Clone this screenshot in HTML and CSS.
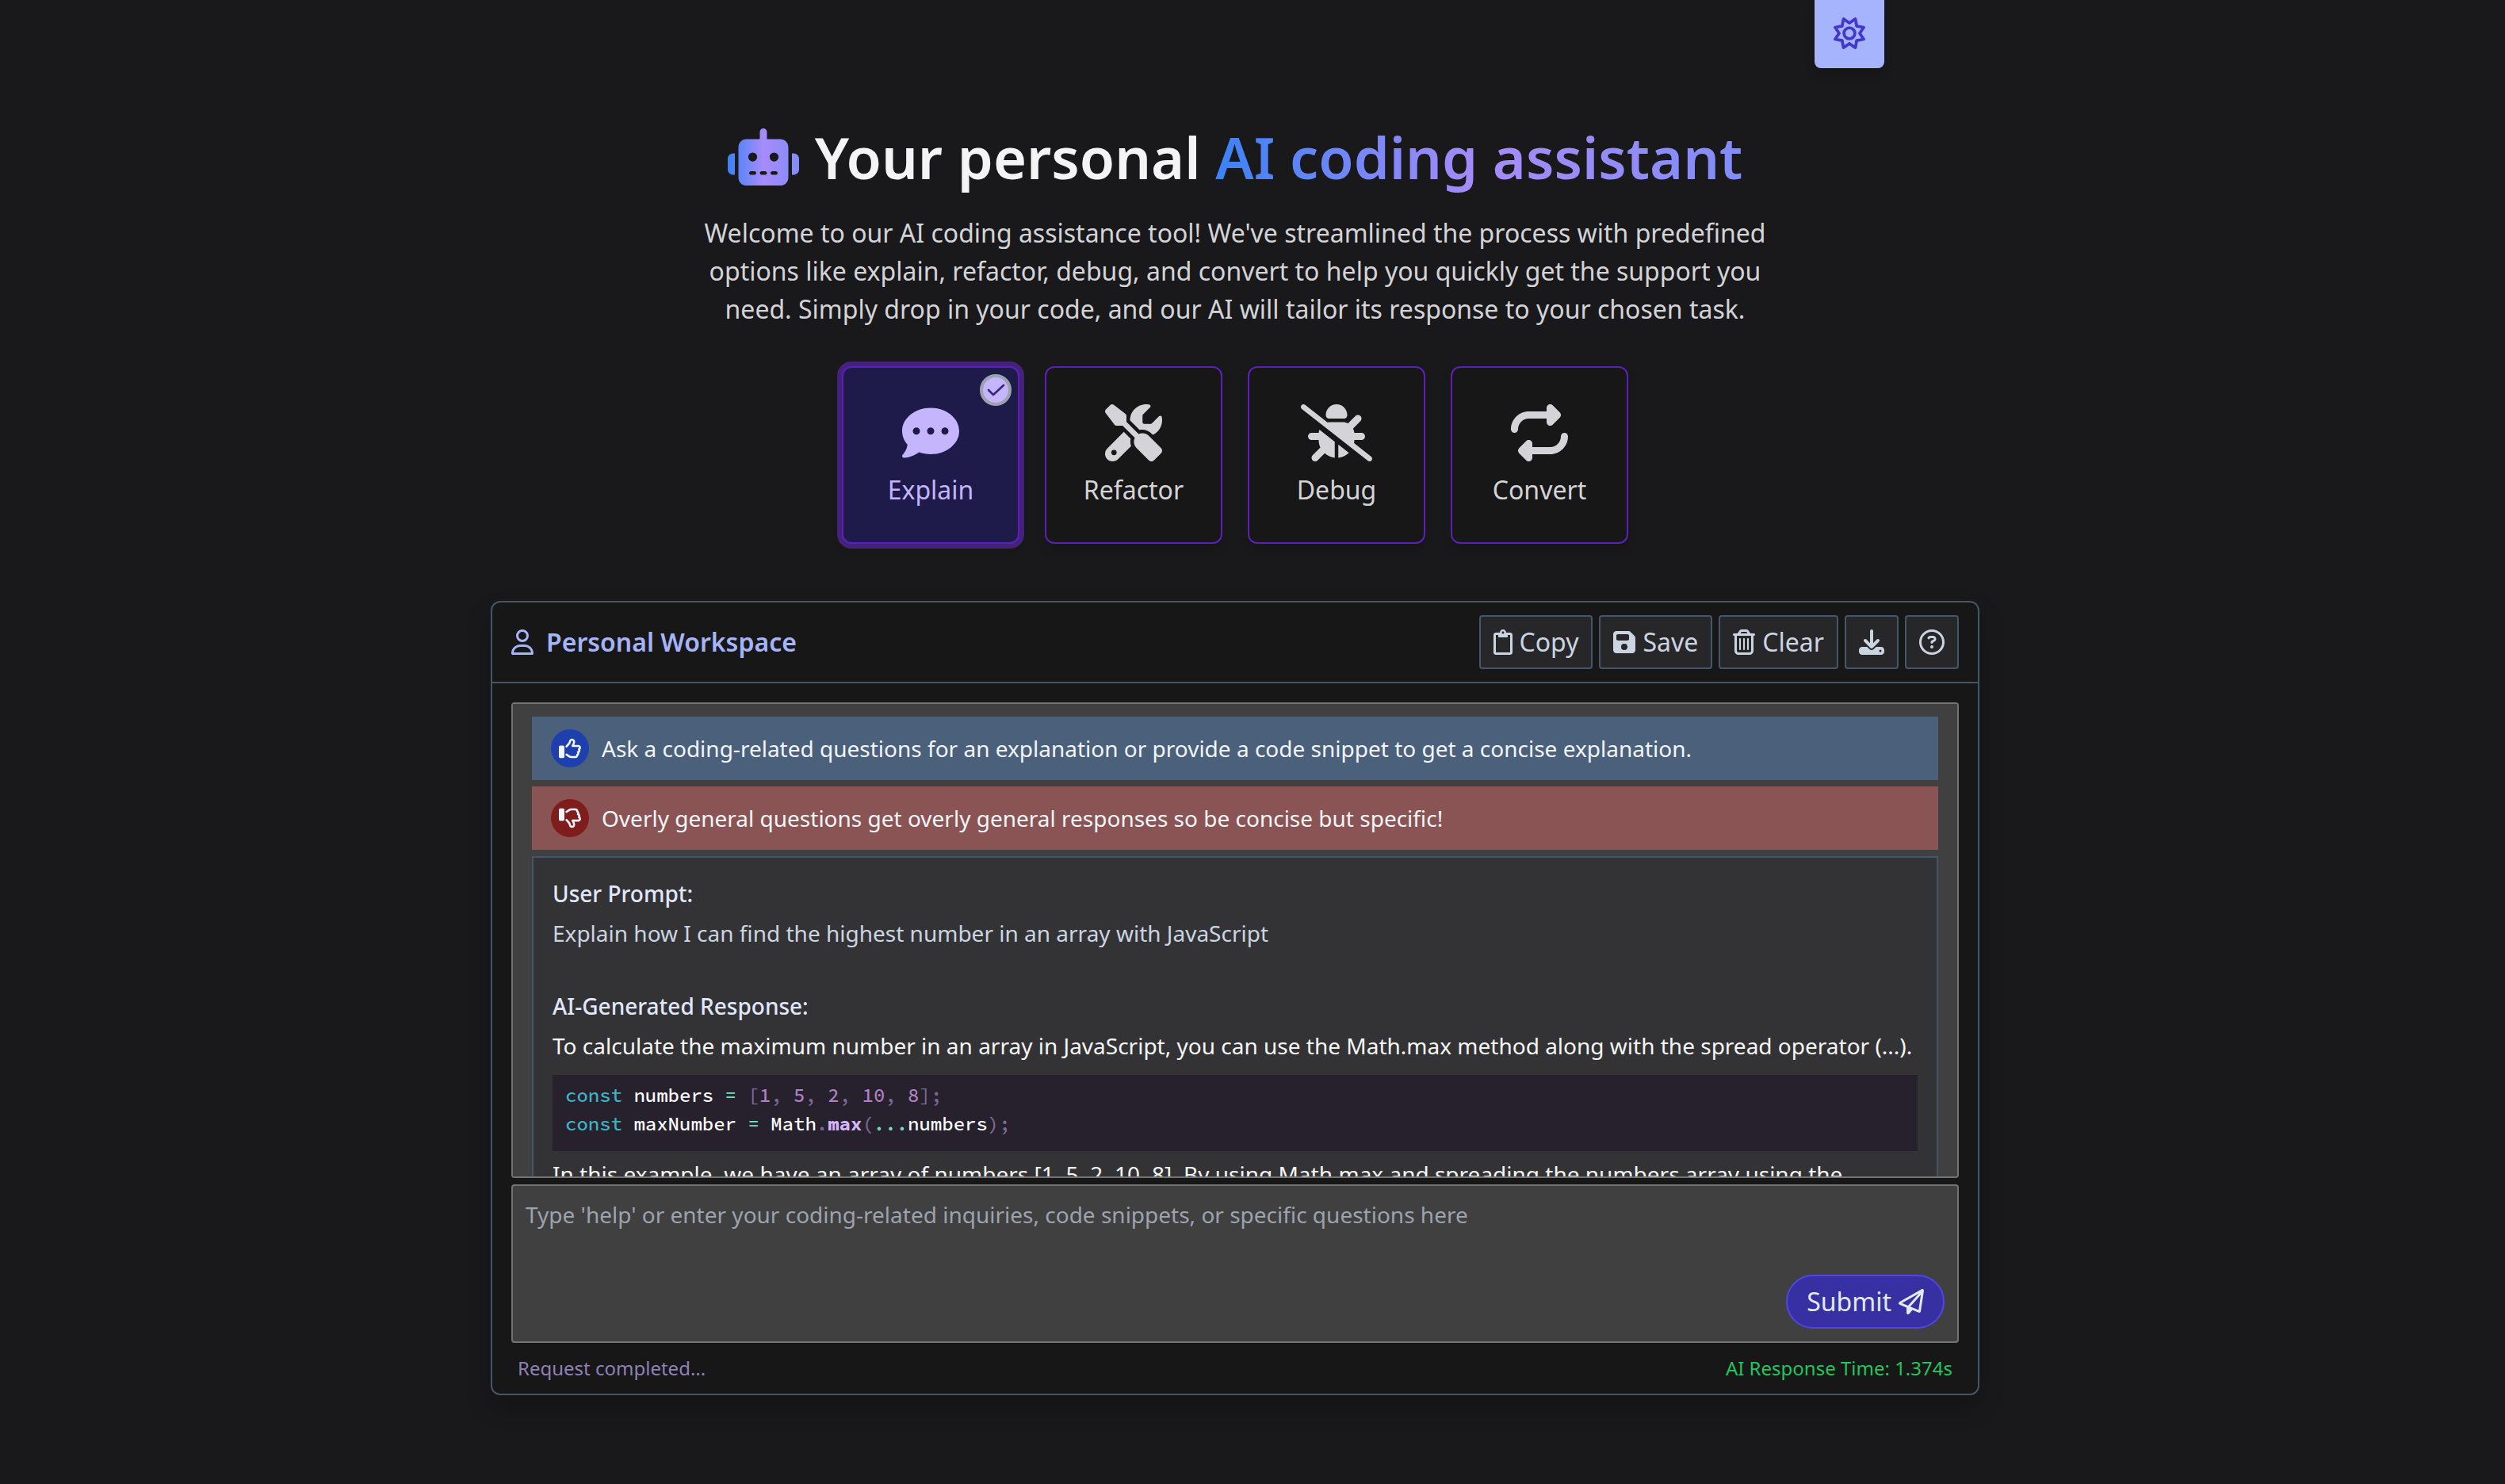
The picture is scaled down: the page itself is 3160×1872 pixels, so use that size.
FILE: index.html
```
<!DOCTYPE html>
<html lang="en">
<head>
<meta charset="utf-8">
<meta name="viewport" content="width=device-width, initial-scale=1">
<title>AI coding assistant</title>
<link rel="stylesheet" href="styles.css">
</head>
<body>
<div class="topbar">
  <button class="settings" type="button" aria-label="Settings">
    <svg class="icon-40" viewBox="0 0 512 512" fill="currentColor"><path d="M375.7 19.7c-1.5-8-6.9-14.7-14.4-17.8s-16.1-2.2-22.8 2.4L256 61.1 173.5 4.2c-6.7-4.6-15.3-5.5-22.8-2.4s-12.9 9.8-14.4 17.8l-18.1 98.5L19.7 136.3c-8 1.5-14.7 6.9-17.8 14.4s-2.2 16.1 2.4 22.8L61.1 256 4.2 338.5c-4.6 6.7-5.5 15.3-2.4 22.8s9.8 13 17.8 14.4l98.5 18.1 18.1 98.5c1.5 8 6.9 14.7 14.4 17.8s16.1 2.2 22.8-2.4L256 450.9l82.5 56.9c6.7 4.6 15.3 5.5 22.8 2.4s12.9-9.8 14.4-17.8l18.1-98.5 98.5-18.1c8-1.5 14.7-6.9 17.8-14.4s2.2-16.1-2.4-22.8L450.9 256l56.9-82.5c4.6-6.7 5.5-15.3 2.4-22.8s-9.8-12.9-17.8-14.4l-98.5-18.1L375.7 19.7zM269.6 110l65.6-45.2 14.4 78.3c1.8 9.8 9.5 17.5 19.3 19.3l78.3 14.4L402 242.4c-5.7 8.2-5.7 19 0 27.2l45.2 65.6-78.3 14.4c-9.8 1.8-17.5 9.5-19.3 19.3l-14.4 78.3L269.6 402c-8.2-5.7-19-5.7-27.2 0l-65.6 45.2-14.4-78.3c-1.8-9.8-9.5-17.5-19.3-19.3L64.8 335.2 110 269.6c5.7-8.2 5.7-19 0-27.2L64.8 176.8l78.3-14.4c9.8-1.8 17.5-9.5 19.3-19.3l14.4-78.3L242.4 110c8.2 5.7 19 5.7 27.2 0zM256 368a112 112 0 1 0 0-224 112 112 0 1 0 0 224zM192 256a64 64 0 1 1 128 0 64 64 0 1 1 -128 0z"/></svg>
  </button>
</div>
<main class="page">
  <header class="hero">
    <h1 class="title">
      <svg class="robot" viewBox="0 0 640 512" aria-hidden="true">
        <defs>
          <linearGradient id="robot-fill" x1="0" x2="1" y1="0" y2="0">
            <stop offset="0" stop-color="#3b82f6"/><stop offset=".5" stop-color="#a78bfa"/><stop offset="1" stop-color="#818cf8"/>
          </linearGradient>
        </defs>
        <path fill="url(#robot-fill)" d="M320 0c17.7 0 32 14.3 32 32V96H472c39.8 0 72 32.2 72 72V440c0 39.8-32.2 72-72 72H168c-39.8 0-72-32.2-72-72V168c0-39.8 32.2-72 72-72H288V32c0-17.7 14.3-32 32-32zM208 384c-8.8 0-16 7.2-16 16s7.2 16 16 16h32c8.8 0 16-7.2 16-16s-7.2-16-16-16H208zm96 0c-8.8 0-16 7.2-16 16s7.2 16 16 16h32c8.8 0 16-7.2 16-16s-7.2-16-16-16H304zm96 0c-8.8 0-16 7.2-16 16s7.2 16 16 16h32c8.8 0 16-7.2 16-16s-7.2-16-16-16H400zM264 256a40 40 0 1 0 -80 0 40 40 0 1 0 80 0zm152 40a40 40 0 1 0 0-80 40 40 0 1 0 0 80zM48 224H64V416H48c-26.5 0-48-21.5-48-48V272c0-26.5 21.5-48 48-48zm544 0c26.5 0 48 21.5 48 48v96c0 26.5-21.5 48-48 48H576V224h16z"/>
      </svg>
      <span>Your personal <span class="accent">AI coding assistant</span></span>
    </h1>
    <p class="intro">Welcome to our AI coding assistance tool! We've streamlined the process with predefined options like explain, refactor, debug, and convert to help you quickly get the support you need. Simply drop in your code, and our AI will tailor its response to your chosen task.</p>
  </header>

  <div class="tasks" role="radiogroup" aria-label="Task">
    <label class="task">
      <input class="task-input" type="radio" name="task" checked>
      <span class="badge"><svg viewBox="0 0 32 32" fill="none" stroke="currentColor" stroke-width="2.6" stroke-linecap="round" stroke-linejoin="round"><path d="M7 16l6 6L26 10"/></svg></span>
      <svg class="task-icon" viewBox="0 0 512 512" fill="currentColor"><path d="M256 448c141.4 0 256-93.1 256-208S397.4 32 256 32S0 125.1 0 240c0 45.1 17.7 86.8 47.7 120.9c-1.9 24.5-11.4 46.3-21.4 62.9c-5.5 9.2-11.1 16.6-15.2 21.6c-2.1 2.5-3.7 4.4-4.9 5.7c-.6 .6-1 1.1-1.3 1.4l-.3 .3c-4.6 4.6-5.9 11.4-3.4 17.4c2.5 6 8.3 9.9 14.8 9.9c28.7 0 57.6-8.9 81.6-19.3c22.9-10 42.4-21.9 54.3-30.6c31.8 11.5 67 17.9 104.1 17.9zM128 208a32 32 0 1 1 0 64 32 32 0 1 1 0-64zm128 0a32 32 0 1 1 0 64 32 32 0 1 1 0-64zm96 32a32 32 0 1 1 64 0 32 32 0 1 1 -64 0z"/></svg>
      <span>Explain</span>
    </label>
    <label class="task">
      <input class="task-input" type="radio" name="task">
      <svg class="task-icon" viewBox="0 0 512 512" fill="currentColor"><path d="M78.6 5C69.1-2.4 55.6-1.5 47 7L7 47c-8.5 8.5-9.4 22-2.1 31.6l80 104c4.5 5.9 11.6 9.4 19 9.4h54.1l109 109c-14.7 29-10 65.4 14.3 89.6l112 112c12.5 12.5 32.8 12.5 45.3 0l64-64c12.5-12.5 12.5-32.8 0-45.3l-112-112c-24.2-24.2-60.6-29-89.6-14.3l-109-109V104c0-7.5-3.5-14.5-9.4-19L78.6 5zM19.9 396.1C7.2 408.8 0 426.1 0 444.1C0 481.6 30.4 512 67.9 512c18 0 35.3-7.2 48-19.9L233.7 374.3c-7.8-20.9-9-43.6-3.6-65.1l-61.7-61.7L19.9 396.1zM512 144c0-10.5-1.1-20.7-3.2-30.5c-2.4-11.2-16.1-14.1-24.2-6l-63.9 63.9c-3 3-7.1 4.7-11.3 4.7H352c-8.8 0-16-7.2-16-16V102.6c0-4.2 1.7-8.3 4.7-11.3l63.9-63.9c8.1-8.1 5.2-21.8-6-24.2C388.7 1.1 378.5 0 368 0C288.5 0 224 64.5 224 144l0 .8 85.3 85.3c36-9.1 75.8 .5 104 28.7L429 274.5c49-23 83-72.8 83-130.5zM56 432a24 24 0 1 1 48 0 24 24 0 1 1 -48 0z"/></svg>
      <span>Refactor</span>
    </label>
    <label class="task">
      <input class="task-input" type="radio" name="task">
      <svg class="task-icon" viewBox="0 0 640 512" fill="currentColor"><path d="M38.8 5.1C28.4-3.1 13.3-1.2 5.1 9.2S-1.2 34.7 9.2 42.9l592 464c10.4 8.2 25.5 6.3 33.7-4.1s6.3-25.5-4.1-33.7L477.4 348.9c1.7-9.4 2.6-19 2.6-28.9h64c17.7 0 32-14.3 32-32s-14.3-32-32-32H479.7c-1.1-14.1-5-27.5-11.1-39.5c.7-.6 1.4-1.2 2.1-1.9l64-64c12.5-12.5 12.5-32.8 0-45.3s-32.8-12.5-45.3 0l-64 64c-.7 .7-1.3 1.4-1.9 2.1C409.2 164.1 393.1 160 376 160H264c-8.3 0-16.3 1-24 2.8L38.8 5.1zM320 0c-53 0-96 43-96 96v3.6c0 15.7 12.7 28.4 28.4 28.4H387.6c15.7 0 28.4-12.7 28.4-28.4V96c0-53-43-96-96-96zM160.3 256H96c-17.7 0-32 14.3-32 32s14.3 32 32 32h64c0 24.6 5.5 47.8 15.4 68.6c-2.2 1.3-4.2 2.9-6 4.8l-64 64c-12.5 12.5-12.5 32.8 0 45.3s32.8 12.5 45.3 0l63.1-63.1c24.5 21.8 55.8 36.2 90.3 39.6V335.5L166.7 227.3c-3.4 9-5.6 18.7-6.4 28.7zM336 479.2c36.6-3.6 69.7-19.6 94.8-43.8L336 360.7V479.2z"/></svg>
      <span>Debug</span>
    </label>
    <label class="task">
      <input class="task-input" type="radio" name="task">
      <svg class="task-icon" viewBox="0 0 512 512" fill="currentColor"><path d="M0 224c0 17.7 14.3 32 32 32s32-14.3 32-32c0-53 43-96 96-96H320v32c0 12.9 7.8 24.6 19.8 29.6s25.7 2.2 34.9-6.9l64-64c12.5-12.5 12.5-32.8 0-45.3l-64-64c-9.2-9.2-22.9-11.9-34.9-6.9S320 19.1 320 32V64H160C71.6 64 0 135.6 0 224zm512 64c0-17.7-14.3-32-32-32s-32 14.3-32 32c0 53-43 96-96 96H192V352c0-12.9-7.8-24.6-19.8-29.6s-25.7-2.2-34.9 6.9l-64 64c-12.5 12.5-12.5 32.8 0 45.3l64 64c9.2 9.2 22.9 11.9 34.9 6.9s19.8-16.6 19.8-29.6V448H352c88.4 0 160-71.6 160-160z"/></svg>
      <span>Convert</span>
    </label>
  </div>

  <section class="workspace">
    <div class="workspace-head">
      <h2 class="workspace-title">
        <svg class="icon-32" viewBox="0 0 448 512" fill="currentColor"><path d="M304 128a80 80 0 1 0 -160 0 80 80 0 1 0 160 0zM96 128a128 128 0 1 1 256 0A128 128 0 1 1 96 128zM49.3 464H398.7c-8.9-63.3-63.3-112-129-112H178.3c-65.7 0-120.1 48.7-129 112zM0 482.3C0 383.8 79.8 304 178.3 304h91.4C368.2 304 448 383.8 448 482.3c0 16.4-13.3 29.7-29.7 29.7H29.7C13.3 512 0 498.7 0 482.3z"/></svg>
        Personal Workspace
      </h2>
      <div class="tools">
        <button class="tool" type="button"><svg class="icon-32" viewBox="0 0 384 512" fill="currentColor"><path d="M336 64h-80c0-35.3-28.7-64-64-64s-64 28.7-64 64H48C21.5 64 0 85.5 0 112v352c0 26.5 21.5 48 48 48h288c26.5 0 48-21.5 48-48V112c0-26.5-21.5-48-48-48zM192 40c13.3 0 24 10.7 24 24s-10.7 24-24 24-24-10.7-24-24 10.7-24 24-24zm144 418c0 3.3-2.7 6-6 6H54c-3.3 0-6-2.7-6-6V118c0-3.3 2.7-6 6-6h42v36c0 6.6 5.4 12 12 12h168c6.6 0 12-5.4 12-12v-36h42c3.3 0 6 2.7 6 6z"/></svg>Copy</button>
        <button class="tool" type="button"><svg class="icon-32" viewBox="0 0 448 512" fill="currentColor"><path d="M64 32C28.7 32 0 60.7 0 96V416c0 35.3 28.7 64 64 64H384c35.3 0 64-28.7 64-64V173.3c0-17-6.7-33.3-18.7-45.3L352 50.7C340 38.7 323.7 32 306.7 32H64zm0 96c0-17.7 14.3-32 32-32H288c17.7 0 32 14.3 32 32v64c0 17.7-14.3 32-32 32H96c-17.7 0-32-14.3-32-32V128zM224 288a64 64 0 1 1 0 128 64 64 0 1 1 0-128z"/></svg>Save</button>
        <button class="tool" type="button"><svg class="icon-32" viewBox="0 0 448 512" fill="currentColor"><path d="M170.5 51.6L151.5 80h145l-19-28.4c-1.5-2.2-4-3.6-6.7-3.6H177.1c-2.7 0-5.2 1.3-6.7 3.6zm147-26.6L354.2 80H368h48 8c13.3 0 24 10.7 24 24s-10.7 24-24 24h-8V432c0 44.2-35.8 80-80 80H112c-44.2 0-80-35.8-80-80V128H24c-13.3 0-24-10.7-24-24S10.7 80 24 80h8H80 93.8l36.7-55.1C140.9 9.4 158.4 0 177.1 0h93.7c18.7 0 36.2 9.4 46.6 24.9zM80 128V432c0 17.7 14.3 32 32 32H336c17.7 0 32-14.3 32-32V128H80zm80 64V400c0 8.8-7.2 16-16 16s-16-7.2-16-16V192c0-8.8 7.2-16 16-16s16 7.2 16 16zm80 0V400c0 8.8-7.2 16-16 16s-16-7.2-16-16V192c0-8.8 7.2-16 16-16s16 7.2 16 16zm80 0V400c0 8.8-7.2 16-16 16s-16-7.2-16-16V192c0-8.8 7.2-16 16-16s16 7.2 16 16z"/></svg>Clear</button>
        <button class="tool" type="button" aria-label="Download"><svg class="icon-32" viewBox="0 0 512 512" fill="currentColor"><path d="M288 32c0-17.7-14.3-32-32-32s-32 14.3-32 32V274.7l-73.4-73.4c-12.5-12.5-32.8-12.5-45.3 0s-12.5 32.8 0 45.3l128 128c12.5 12.5 32.8 12.5 45.3 0l128-128c12.5-12.5 12.5-32.8 0-45.3s-32.8-12.5-45.3 0L288 274.7V32zM64 352c-35.3 0-64 28.7-64 64v32c0 35.3 28.7 64 64 64H448c35.3 0 64-28.7 64-64V416c0-35.3-28.7-64-64-64H346.5l-45.3 45.3c-25 25-65.5 25-90.5 0L165.5 352H64zm368 56a24 24 0 1 1 0 48 24 24 0 1 1 0-48z"/></svg></button>
        <button class="tool" type="button" aria-label="Help"><svg class="icon-32" viewBox="0 0 512 512" fill="currentColor"><path d="M464 256A208 208 0 1 0 48 256a208 208 0 1 0 416 0zM0 256a256 256 0 1 1 512 0A256 256 0 1 1 0 256zm169.8-90.7c7.9-22.3 29.1-37.3 52.8-37.3h58.3c34.9 0 63.1 28.3 63.1 63.1c0 22.6-12.1 43.5-31.7 54.8L280 264.4c-.2 13-10.9 23.6-24 23.6c-13.3 0-24-10.7-24-24V250.5c0-8.6 4.6-16.5 12.1-20.8l44.3-25.4c4.7-2.7 7.6-7.7 7.6-13.1c0-8.4-6.8-15.1-15.1-15.1H222.6c-3.4 0-6.4 2.1-7.5 5.3l-.4 1.2c-4.4 12.5-18.2 19-30.6 14.6s-19-18.2-14.6-30.6l.4-1.2zM224 352a32 32 0 1 1 64 0 32 32 0 1 1 -64 0z"/></svg></button>
      </div>
    </div>

    <div class="workspace-body">
      <div class="log">
        <div class="tip tip-good">
          <span class="tip-icon"><svg viewBox="0 0 512 512" fill="currentColor"><path id="thumb" d="M323.8 34.8c-38.2-10.9-78.1 11.2-89 49.4l-5.7 20c-3.7 13-10.4 25-19.5 35l-51.3 56.4c-8.9 9.8-8.2 25 1.6 33.9s25 8.2 33.9-1.6l51.3-56.4c14.1-15.5 24.4-34 30.1-54.1l5.7-20c3.6-12.7 16.9-20.1 29.7-16.5s20.1 16.9 16.5 29.7l-5.7 20c-5.7 19.9-14.7 38.7-26.6 55.5c-5.2 7.3-5.8 16.9-1.7 24.9s12.3 13 21.3 13L448 224c8.8 0 16 7.2 16 16c0 6.8-4.3 12.7-10.4 15c-7.4 2.8-13 9-14.9 16.7s.1 15.8 5.3 21.7c2.5 2.8 4 6.5 4 10.6c0 7.8-5.6 14.3-13 15.7c-8.2 1.6-15.1 7.3-18 15.2s-1.6 16.7 3.6 23.3c2.1 2.7 3.4 6.1 3.4 9.9c0 6.7-4.2 12.6-10.2 14.9c-11.5 4.5-17.7 16.9-14.4 28.8c.4 1.3 .6 2.8 .6 4.3c0 8.8-7.2 16-16 16H286.5c-12.6 0-25-3.7-35.5-10.7l-61.7-41.1c-11-7.4-25.9-4.4-33.3 6.7s-4.4 25.9 6.7 33.3l61.7 41.1c18.4 12.3 40 18.8 62.1 18.8H384c34.7 0 62.9-27.6 64-62c14.6-11.7 24-29.7 24-50c0-4.5-.5-8.8-1.3-13c15.4-11.7 25.3-30.2 25.3-51c0-6.5-1-12.8-2.8-18.7C504.8 273.7 512 257.7 512 240c0-35.3-28.6-64-64-64l-92.3 0c4.7-10.4 8.7-21.2 11.8-32.2l5.7-20c10.9-38.2-11.2-78.1-49.4-89zM32 192c-17.7 0-32 14.3-32 32V448c0 17.7 14.3 32 32 32H96c17.7 0 32-14.3 32-32V224c0-17.7-14.3-32-32-32H32z"/></svg></span>
          Ask a coding-related questions for an explanation or provide a code snippet to get a concise explanation.
        </div>
        <div class="tip tip-bad">
          <span class="tip-icon"><svg viewBox="0 0 512 512" fill="currentColor"><use href="#thumb" transform="matrix(1 0 0 -1 0 512)"/></svg></span>
          Overly general questions get overly general responses so be concise but specific!
        </div>
        <article class="exchange">
          <h3 class="who">User Prompt:</h3>
          <p class="prompt">Explain how I can find the highest number in an array with JavaScript</p>
          <h3 class="who">AI-Generated Response:</h3>
          <p class="answer">To calculate the maximum number in an array in JavaScript, you can use the Math.max method along with the spread operator (...).</p>
<pre class="code"><code><span class="kw">const</span> numbers <span class="op">=</span> <span class="pn">[</span><span class="num">1</span><span class="pn">,</span> <span class="num">5</span><span class="pn">,</span> <span class="num">2</span><span class="pn">,</span> <span class="num">10</span><span class="pn">,</span> <span class="num">8</span><span class="pn">];</span>
<span class="kw">const</span> maxNumber <span class="op">=</span> Math<span class="pn">.</span><span class="fn">max</span><span class="pn">(</span><span class="op">...</span>numbers<span class="pn">);</span></code></pre>
          <p class="answer">In this example, we have an array of numbers [1, 5, 2, 10, 8]. By using Math.max and spreading the numbers array using the</p>
        </article>
      </div>
      <form class="composer">
        <textarea class="composer-input" aria-label="Your question" placeholder="Type 'help' or enter your coding-related inquiries, code snippets, or specific questions here"></textarea>
        <button class="submit" type="button">Submit<svg class="icon-32" viewBox="0 0 512 512" fill="currentColor"><path d="M16.1 260.2c-22.6 12.9-20.5 47.3 3.6 57.3L160 376V479.3c0 18.1 14.6 32.7 32.7 32.7c9.7 0 18.9-4.3 25.1-11.8l62-74.3 123.9 51.6c18.9 7.9 40.8-4.5 43.9-24.7l64-416c1.9-12.1-3.4-24.3-13.5-31.2s-23.3-7.5-34-1.4l-448 256zm52.1 25.5L409.7 90.6 190.1 336l1.2 1L68.2 285.7zM403.3 425.4L236.7 355.9 450.8 116.6 403.3 425.4z"/></svg></button>
      </form>
      <div class="status">
        <span class="status-text">Request completed...</span>
        <span class="status-time">AI Response Time: 1.374s</span>
      </div>
    </div>
  </section>
</main>
</body>
</html>
```
FILE: styles.css
```
* {
  box-sizing: border-box;
}

body {
  margin: 0;
  padding-right: 44px;
  min-height: 100vh;
  background: #19191b;
  color: #d4d4d8;
  font: 400 32px/40px "Noto Sans", sans-serif;
}

h1, h2, h3, p, pre {
  margin: 0;
}

button, textarea {
  font: inherit;
}

svg {
  display: block;
  flex: none;
}

.icon-32 {
  height: 32px;
}

.icon-40 {
  height: 40px;
}

.topbar {
  display: flex;
  justify-content: flex-end;
  max-width: 1638px;
  margin: 0 auto;
}

.settings {
  display: flex;
  padding: 22px 24px 24px;
  border: 0;
  border-radius: 0 0 8px 8px;
  background: #a5b4fc;
  color: #4338ca;
  box-shadow: 0 8px 12px rgba(0, 0, 0, .15);
}

.page {
  display: flex;
  flex-direction: column;
  align-items: center;
  padding: 72px 0 112px;
}

.hero {
  display: flex;
  flex-direction: column;
  align-items: center;
  gap: 32px;
}

.title {
  display: flex;
  align-items: center;
  gap: 20px;
  color: #f4f4f5;
  font-size: 72px;
  font-weight: 600;
  line-height: 80px;
}

.robot {
  height: 72px;
}

.accent {
  background: linear-gradient(to right, #3b82f6, #a78bfa, #818cf8);
  -webkit-background-clip: text;
  background-clip: text;
  color: transparent;
}

.intro {
  max-width: 1344px;
  line-height: 48px;
  text-align: center;
}

.tasks {
  display: flex;
  gap: 32px;
  margin: 48px 0 72px;
}

.task {
  position: relative;
  display: flex;
  flex-direction: column;
  align-items: center;
  justify-content: center;
  gap: 16px;
  width: 224px;
  aspect-ratio: 1;
  border: 2px solid #5b21b6;
  border-radius: 12px;
  background: #171717;
  box-shadow: 0 8px 12px rgba(0, 0, 0, .12);
}

.task:has(:checked) {
  background: #1e1b4b;
  color: #c4b5fd;
  box-shadow: 0 0 0 6px #44217a, 0 8px 12px rgba(0, 0, 0, .12);
}

.task-input {
  position: absolute;
  inset: 0;
  margin: 0;
  appearance: none;
}

.task-icon {
  height: 72px;
}

.badge {
  position: absolute;
  top: 8px;
  right: 8px;
  width: 40px;
  height: 40px;
  border: 4px solid #9ca3af;
  border-radius: 50%;
  background: #c4b5fd;
  color: #3b2578;
}

.workspace {
  width: 100%;
  max-width: 1878px;
  border: 2px solid #475569;
  border-radius: 12px;
  background: #171717;
  box-shadow: 0 16px 32px rgba(0, 0, 0, .2);
}

.workspace-head {
  display: flex;
  align-items: center;
  justify-content: space-between;
  padding: 16px 24px;
  border-bottom: 2px solid #475569;
}

.workspace-title {
  display: flex;
  align-items: center;
  gap: 16px;
  color: #a5b4fc;
  font-size: 32px;
  font-weight: 600;
}

.tools {
  display: flex;
  gap: 8px;
}

.tool {
  display: flex;
  align-items: center;
  gap: 9px;
  padding: 12px 16px;
  min-height: 68px;
  border: 2px solid #475569;
  border-radius: 4px;
  background: #27272a;
  color: #cbd5e1;
}

.workspace-body {
  display: flex;
  flex-direction: column;
  gap: 8px;
  padding: 24px 24px 16px;
}

.log {
  display: flex;
  flex-direction: column;
  gap: 8px;
  height: 600px;
  padding: 16px 24px 0;
  overflow-y: auto;
  scrollbar-width: none;
  border: 2px solid #737373;
  border-radius: 4px;
  background: #404040;
  font-size: 28px;
  line-height: 42px;
}

.tip {
  display: flex;
  align-items: center;
  gap: 16px;
  padding: 16px 24px;
  color: #f1f5f9;
}

.tip-good {
  background: #4b607a;
}

.tip-bad {
  background: #8a5454;
}

.tip-icon {
  display: grid;
  place-items: center;
  flex: none;
  width: 48px;
  height: 48px;
  border-radius: 50%;
}

.tip-icon svg {
  width: 28px;
}

.tip-good .tip-icon {
  background: #1e40af;
}

.tip-bad .tip-icon {
  background: #7f1d1d;
}

.exchange {
  display: flex;
  flex-direction: column;
  gap: 8px;
  padding: 24px;
  border: 2px solid #475569;
  background: #333335;
}

.who {
  color: #e0e7ff;
  font-size: 28px;
  font-weight: 500;
}

.prompt {
  margin-bottom: 42px;
  color: #cbd5e1;
}

.answer {
  color: #f5f5f5;
}

.code {
  margin-top: 8px;
  padding: 8px 16px 16px;
  background: #27212e;
  color: #fff;
  font: 500 24px/36px "Source Code Pro", "DejaVu Sans Mono", monospace;
}

.code code {
  font: inherit;
}

.kw {
  color: #40b4c4;
}

.op {
  color: #74dfc4;
}

.pn {
  color: #7b6995;
}

.num {
  color: #b381c5;
}

.fn {
  color: #d8b4fe;
  font-weight: 700;
}

.composer {
  position: relative;
  display: flex;
}

.composer-input {
  flex: 1;
  height: 200px;
  padding: 16px;
  resize: none;
  border: 2px solid #737373;
  border-radius: 4px;
  background: #404040;
  color: #f5f5f5;
  font-size: 28px;
}

.composer-input::placeholder {
  color: #9ca3af;
}

.submit {
  position: absolute;
  right: 18px;
  bottom: 18px;
  display: flex;
  align-items: center;
  gap: 9px;
  padding: 12px 24px;
  border: 2px solid #4f46e5;
  border-radius: 34px;
  background: #3730a3;
  color: #e2e8f0;
}

.status {
  display: flex;
  justify-content: space-between;
  padding: 8px 8px 0;
  font-size: 24px;
  line-height: 32px;
}

.status-text {
  color: #8f81b8;
}

.status-time {
  color: #22c55e;
}
```
